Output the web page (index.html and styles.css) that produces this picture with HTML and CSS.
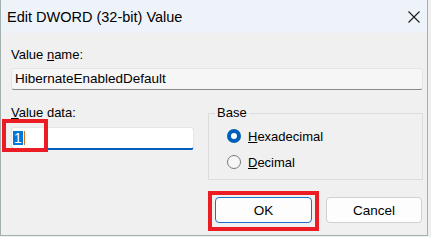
FILE: index.html
```html
<!DOCTYPE html>
<html>
<head>
<meta charset="utf-8">
<link rel="stylesheet" href="styles.css">
</head>
<body>
<div class="window">
  <div class="titlebar">
    <span class="title">Edit DWORD (32-bit) Value</span>
    <svg class="close" width="12" height="12" viewBox="0 0 12 12"><path d="M0.5 0.5 L11.5 11.5 M11.5 0.5 L0.5 11.5" stroke="#1b1b1b" stroke-width="1.1" fill="none"/></svg>
  </div>
  <div class="content">
    <div class="label">Value <u>n</u>ame:</div>
    <div class="readonly">HibernateEnabledDefault</div>
    <div class="row">
      <div class="left">
        <div class="label"><u>V</u>alue data:</div>
        <div class="input"><span class="sel">1</span><span class="caret"></span></div>
      </div>
      <fieldset class="group">
        <legend>Base</legend>
        <div class="radios">
          <div class="radio-row"><span class="radio checked"></span><span><u>H</u>exadecimal</span></div>
          <div class="radio-row"><span class="radio"></span><span><u>D</u>ecimal</span></div>
        </div>
      </fieldset>
    </div>
    <div class="buttons">
      <div class="btn primary">OK</div>
      <div class="btn">Cancel</div>
    </div>
  </div>
  <div class="mark mark-data"></div>
  <div class="mark mark-ok"></div>
</div>
</body>
</html>
```

FILE: styles.css
```css
html, body {
  margin: 0;
  padding: 0;
  background: #f0f0f0;
}
body {
  font-family: "Liberation Sans", Arial, sans-serif;
  font-size: 13px;
  color: #000;
}
.window {
  position: relative;
  width: 428px;
  height: 236px;
  box-sizing: border-box;
  border-left: 1px solid #a3b1ae;
  border-right: 1px solid #a3b1ae;
  border-bottom: 1px solid #a3b1ae;
  background: #f0f0f0;
}
.titlebar {
  height: 33px;
  background: #eef3f9;
  display: flex;
  align-items: center;
  justify-content: space-between;
  padding: 0 7px 0 6px;
}
.title {
  font-size: 14.5px;
  color: #000;
}
.close {
  display: block;
  margin-top: 0px;
}
.content {
  padding: 14px 4px 0 10px;
}
.label {
  height: 16px;
  line-height: 16px;
}
.readonly {
  margin-top: 5px;
  height: 22px;
  box-sizing: border-box;
  border: 1px solid #e4e4e4;
  border-bottom: 1px solid #8a8a8a;
  border-radius: 3px;
  background: #f6f6f6;
  line-height: 20px;
  padding-left: 3px;
  font-size: 13.5px;
}
.row {
  display: flex;
  align-items: flex-start;
  margin-top: 15px;
}
.left {
  width: 183px;
}
.input {
  margin-top: 6px;
  height: 23px;
  box-sizing: border-box;
  background: #fff;
  border: 1px solid #e6e6e6;
  border-bottom: 2px solid #005fb8;
  border-radius: 3px;
  display: flex;
  align-items: center;
  padding-left: 1px;
}
.sel {
  background: #0078d7;
  color: #fff;
  height: 14px;
  line-height: 14px;
  padding: 0 1px;
  font-size: 14px;
}
.caret {
  width: 1px;
  height: 14px;
  background: #d9701e;
  margin-left: 1px;
}
.group {
  margin: 0 0 0 14px;
  width: 215px;
  height: 75px;
  box-sizing: border-box;
  border: 1px solid #dcdcdc;
  border-radius: 0;
  padding: 5px 0 0 6px;
}
.group legend {
  padding: 0 2px;
  line-height: 16px;
  height: 16px;
}
.radios {
  margin-left: 12px;
  display: flex;
  flex-direction: column;
  gap: 6px;
}
.radio-row {
  height: 20px;
  display: flex;
  align-items: center;
  gap: 7px;
}
.radio {
  width: 14px;
  height: 14px;
  box-sizing: border-box;
  border-radius: 50%;
  border: 1px solid #7a7a7a;
  background: #f7f7f7;
  display: flex;
  align-items: center;
  justify-content: center;
}
.radio.checked {
  border: none;
  background: #005fb8;
}
.radio.checked::after {
  content: "";
  width: 6px;
  height: 6px;
  border-radius: 50%;
  background: #fff;
}
.buttons {
  margin-top: 17px;
  display: flex;
  justify-content: flex-end;
  gap: 14px;
  padding-right: 1px;
}
.btn {
  width: 96px;
  height: 26px;
  box-sizing: border-box;
  border: 1px solid #d1d1d1;
  border-radius: 4px;
  background: #fdfdfd;
  display: flex;
  align-items: center;
  justify-content: center;
  font-size: 13.5px;
}
.btn.primary {
  border-color: #1a73c8;
  width: 97px;
}
.mark {
  position: absolute;
  box-sizing: border-box;
  border: 4px solid #ec1c24;
}
.mark-data {
  left: 1px;
  top: 119px;
  width: 46px;
  height: 33px;
}
.mark-ok {
  left: 207px;
  top: 191px;
  width: 111px;
  height: 40px;
}
```
